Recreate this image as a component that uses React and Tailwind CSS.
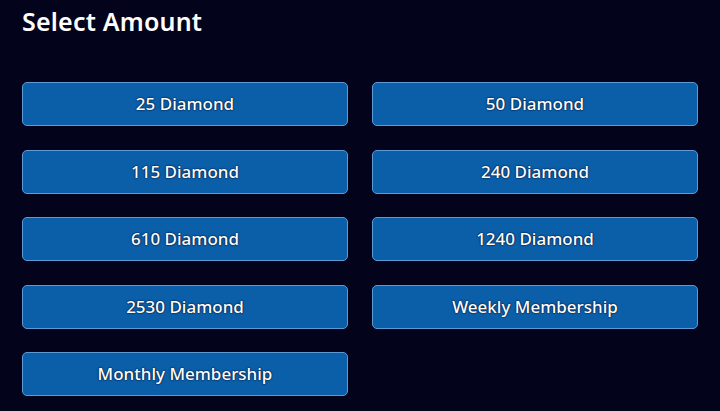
export default function App() {
  const items = [
    "25 Diamond",
    "50 Diamond",
    "115 Diamond",
    "240 Diamond",
    "610 Diamond",
    "1240 Diamond",
    "2530 Diamond",
    "Weekly Membership",
    "Monthly Membership",
  ];
  return (
    <div
      className="w-[720px] h-[411px] bg-[#03031c] overflow-hidden px-[22px] pt-[4px]"
      style={{ fontFamily: '"Noto Sans", "Open Sans", sans-serif' }}
    >
      <h1 className="text-white text-[25px] font-semibold leading-[34px] tracking-[0.2px]">
        Select Amount
      </h1>
      <div className="grid grid-cols-2 gap-x-[24px] gap-y-[23.5px] mt-[44px] w-[676px]">
        {items.map((t) => (
          <button
            key={t}
            className="h-[44px] rounded-[5px] bg-[#0b5fa8] border border-[#5c9ad6] text-white text-[17px] font-medium flex items-center justify-center"
            style={{ textShadow: "0 0 1.5px #021030, 0 0 1.5px #021030" }}
          >
            {t}
          </button>
        ))}
      </div>
    </div>
  );
}
